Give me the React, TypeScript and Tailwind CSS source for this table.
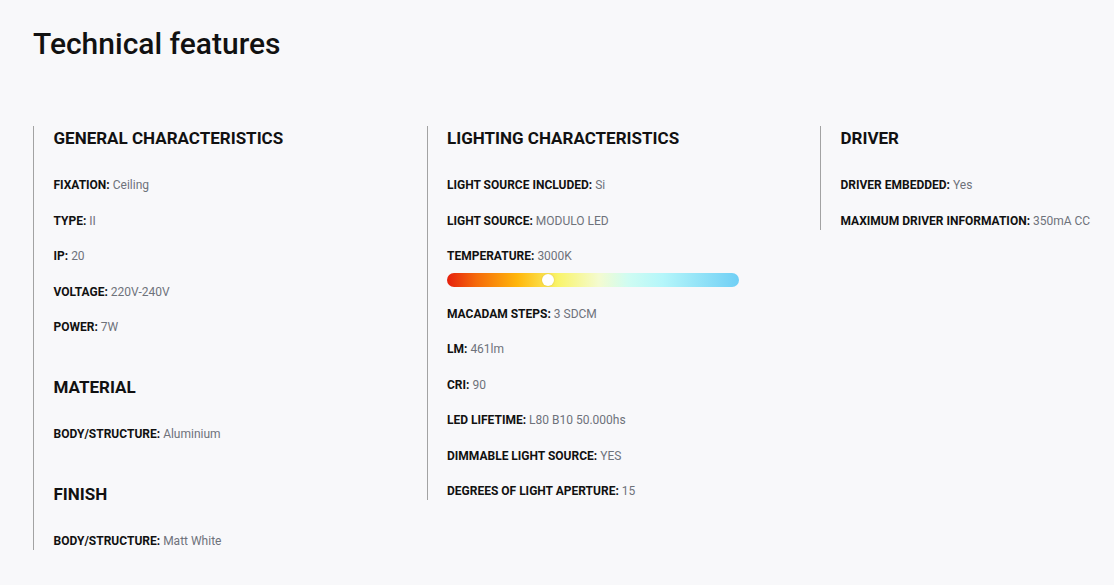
import React from "react";

type Item = { label: string; value: string; bar?: boolean };
type Section = { title: string; items: Item[] };

const columns: Section[][] = [
  [
    {
      title: "GENERAL CHARACTERISTICS",
      items: [
        { label: "FIXATION", value: "Ceiling" },
        { label: "TYPE", value: "II" },
        { label: "IP", value: "20" },
        { label: "VOLTAGE", value: "220V-240V" },
        { label: "POWER", value: "7W" },
      ],
    },
    { title: "MATERIAL", items: [{ label: "BODY/STRUCTURE", value: "Aluminium" }] },
    { title: "FINISH", items: [{ label: "BODY/STRUCTURE", value: "Matt White" }] },
  ],
  [
    {
      title: "LIGHTING CHARACTERISTICS",
      items: [
        { label: "LIGHT SOURCE INCLUDED", value: "Si" },
        { label: "LIGHT SOURCE", value: "MODULO LED" },
        { label: "TEMPERATURE", value: "3000K", bar: true },
        { label: "MACADAM STEPS", value: "3 SDCM" },
        { label: "LM", value: "461lm" },
        { label: "CRI", value: "90" },
        { label: "LED LIFETIME", value: "L80 B10 50.000hs" },
        { label: "DIMMABLE LIGHT SOURCE", value: "YES" },
        { label: "DEGREES OF LIGHT APERTURE", value: "15" },
      ],
    },
  ],
  [
    {
      title: "DRIVER",
      items: [
        { label: "DRIVER EMBEDDED", value: "Yes" },
        { label: "MAXIMUM DRIVER INFORMATION", value: "350mA CC" },
      ],
    },
  ],
];

function TempBar() {
  return (
    <div className="relative mt-[8px] h-[14px] w-[292px] rounded-full bg-[linear-gradient(90deg,#e6200c_0%,#f56a0a_10%,#ffb60a_24%,#f9f46a_38%,#f4fbd0_52%,#cffcf2_62%,#b4f6fa_74%,#70cff5_100%)]">
      <div className="absolute left-[95px] top-[1px] h-[12px] w-[12px] rounded-full bg-white shadow-[0_0_2px_rgba(0,0,0,0.15)]" />
    </div>
  );
}

export default function App() {
  return (
    <div className="min-h-screen overflow-hidden bg-[#f8f8fa] pl-[33px] pt-[26px] text-[#111] font-['Roboto',sans-serif]">
      <h1 className="text-[30px] leading-[36px] font-medium">Technical features</h1>

      <div className="mt-[64px] grid w-[1181px] grid-cols-[393.5px_393.5px_393.5px] items-start">
        {columns.map((col, i) => (
          <div key={i} className="flex flex-col gap-[39px] border-l border-[#a3a3a3] pl-[19.5px]">
            {col.map((sec) => (
              <div key={sec.title}>
                <h2 className="mb-[26px] text-[17px] leading-[24px] font-bold">{sec.title}</h2>
                <div className="flex flex-col gap-[17.5px]">
                  {sec.items.map((it) => (
                    <div key={it.label}>
                      <p className="text-[12px] leading-[18px]">
                        <span className="font-bold">{it.label}:</span>{" "}
                        <span className="text-[#6e727a]">{it.value}</span>
                      </p>
                      {it.bar && <TempBar />}
                    </div>
                  ))}
                </div>
              </div>
            ))}
          </div>
        ))}
      </div>
    </div>
  );
}
